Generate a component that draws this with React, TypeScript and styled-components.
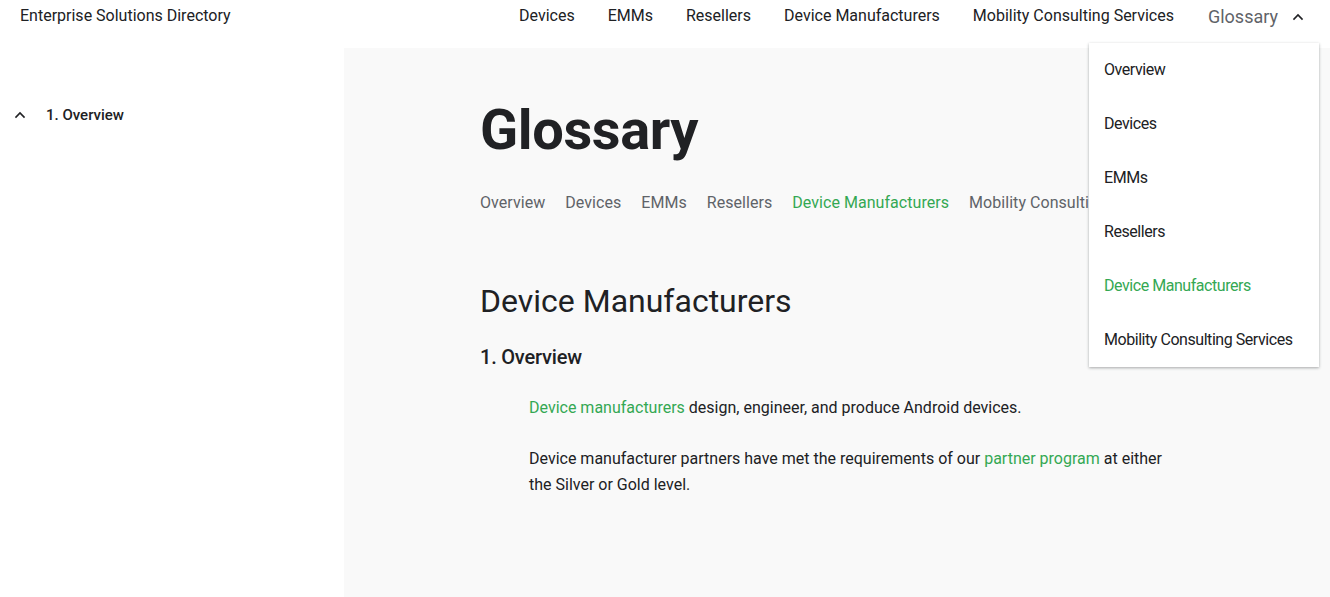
import React from "react";
import styled, { createGlobalStyle } from "styled-components";

const GlobalStyle = createGlobalStyle`
  html, body { margin: 0; padding: 0; background: #ffffff; }
  body { font-family: Roboto, "Noto Sans", Arial, sans-serif; color: #202124; -webkit-font-smoothing: antialiased; }
  * { box-sizing: border-box; }
`;

const GREEN = "#34a853";

const Page = styled.div`
  position: relative;
  width: 1330px;
  height: 597px;
  overflow: hidden;
  display: flex;
  flex-direction: column;
`;

const Header = styled.header`
  height: 48px;
  display: flex;
  align-items: flex-start;
  justify-content: space-between;
  padding: 4px 26px 0 20px;
`;

const Brand = styled.div`
  font-size: 16px;
  line-height: 24px;
  color: #202124;
`;

const TopNav = styled.nav`
  display: flex;
  align-items: flex-start;
  gap: 33px;
`;

const TopLink = styled.a`
  font-size: 16px;
  line-height: 24px;
  color: #202124;
  text-decoration: none;
`;

const GlossaryToggle = styled.button`
  display: flex;
  align-items: center;
  gap: 14px;
  border: 0;
  background: none;
  padding: 0;
  margin-left: 1px;
  font-family: inherit;
  font-size: 18px;
  line-height: 26px;
  color: #5f6368;
  cursor: pointer;
`;

const Body = styled.div`
  flex: 1;
  display: grid;
  grid-template-columns: 344px 1fr;
`;

const Sidebar = styled.aside`
  padding: 55px 0 0 14px;
`;

const SideItem = styled.div`
  display: flex;
  align-items: center;
  gap: 20px;
  font-size: 15px;
  line-height: 24px;
  font-weight: 500;
  color: #202124;
`;

const Panel = styled.main`
  background: #f9f9f9;
  padding: 50px 0 0 136px;
`;

const Title = styled.h1`
  margin: 0;
  font-size: 56px;
  line-height: 64px;
  font-weight: 700;
  color: #202124;
  letter-spacing: -0.4px;
`;

const Tabs = styled.div`
  display: flex;
  gap: 20px;
  margin-top: 29px;
  white-space: nowrap;
`;

const Tab = styled.a<{ $active?: boolean }>`
  font-size: 16px;
  line-height: 24px;
  letter-spacing: 0.05px;
  color: ${(p) => (p.$active ? GREEN : "#5f6368")};
  text-decoration: none;
`;

const SectionTitle = styled.h2`
  margin: 66px 0 0;
  font-size: 32px;
  line-height: 40px;
  font-weight: 400;
  color: #202124;
`;

const SubTitle = styled.h3`
  margin: 22px 0 0;
  font-size: 20px;
  line-height: 28px;
  font-weight: 500;
  color: #202124;
  letter-spacing: -0.2px;
`;

const Para = styled.p<{ $gap: number }>`
  margin: ${(p) => p.$gap}px 0 0 49px;
  max-width: 652px;
  font-size: 16px;
  line-height: 26px;
  color: #202124;
`;

const Link = styled.a`
  color: ${GREEN};
  text-decoration: none;
`;

const Dropdown = styled.ul`
  position: absolute;
  top: 43px;
  left: 1089px;
  width: 230px;
  margin: 0;
  padding: 0;
  list-style: none;
  background: #ffffff;
  box-shadow: 0 1px 3px rgba(60, 64, 67, 0.3), 0 1px 2px rgba(60, 64, 67, 0.15);
`;

const DropItem = styled.li<{ $active?: boolean }>`
  height: 54px;
  display: flex;
  align-items: center;
  padding: 0 15px 2px;
  font-size: 16px;
  color: ${(p) => (p.$active ? GREEN : "#202124")};
  letter-spacing: -0.45px;
`;

const Chevron = ({ color = "#202124", size = 12 }: { color?: string; size?: number }) => (
  <svg width={size} height={size} viewBox="0 0 12 12" fill="none">
    <path d="M2 8L6 4L10 8" stroke={color} strokeWidth="1.6" strokeLinecap="square" />
  </svg>
);

const items = ["Overview", "Devices", "EMMs", "Resellers", "Device Manufacturers", "Mobility Consulting Services"];

export default function App() {
  return (
    <>
      <GlobalStyle />
      <Page>
        <Header>
          <Brand>Enterprise Solutions Directory</Brand>
          <TopNav>
            <TopLink>Devices</TopLink>
            <TopLink>EMMs</TopLink>
            <TopLink>Resellers</TopLink>
            <TopLink>Device Manufacturers</TopLink>
            <TopLink>Mobility Consulting Services</TopLink>
            <GlossaryToggle>
              Glossary
              <Chevron color="#202124" />
            </GlossaryToggle>
          </TopNav>
        </Header>
        <Body>
          <Sidebar>
            <SideItem>
              <Chevron />
              1. Overview
            </SideItem>
          </Sidebar>
          <Panel>
            <Title>Glossary</Title>
            <Tabs>
              {items.map((t) => (
                <Tab key={t} $active={t === "Device Manufacturers"}>
                  {t}
                </Tab>
              ))}
            </Tabs>
            <SectionTitle>Device Manufacturers</SectionTitle>
            <SubTitle>1. Overview</SubTitle>
            <Para $gap={24}>
              <Link>Device manufacturers</Link> design, engineer, and produce Android devices.
            </Para>
            <Para $gap={25}>
              Device manufacturer partners have met the requirements of our <Link>partner program</Link> at either
              the Silver or Gold level.
            </Para>
          </Panel>
        </Body>
        <Dropdown>
          {items.map((t) => (
            <DropItem key={t} $active={t === "Device Manufacturers"}>
              {t}
            </DropItem>
          ))}
        </Dropdown>
      </Page>
    </>
  );
}
